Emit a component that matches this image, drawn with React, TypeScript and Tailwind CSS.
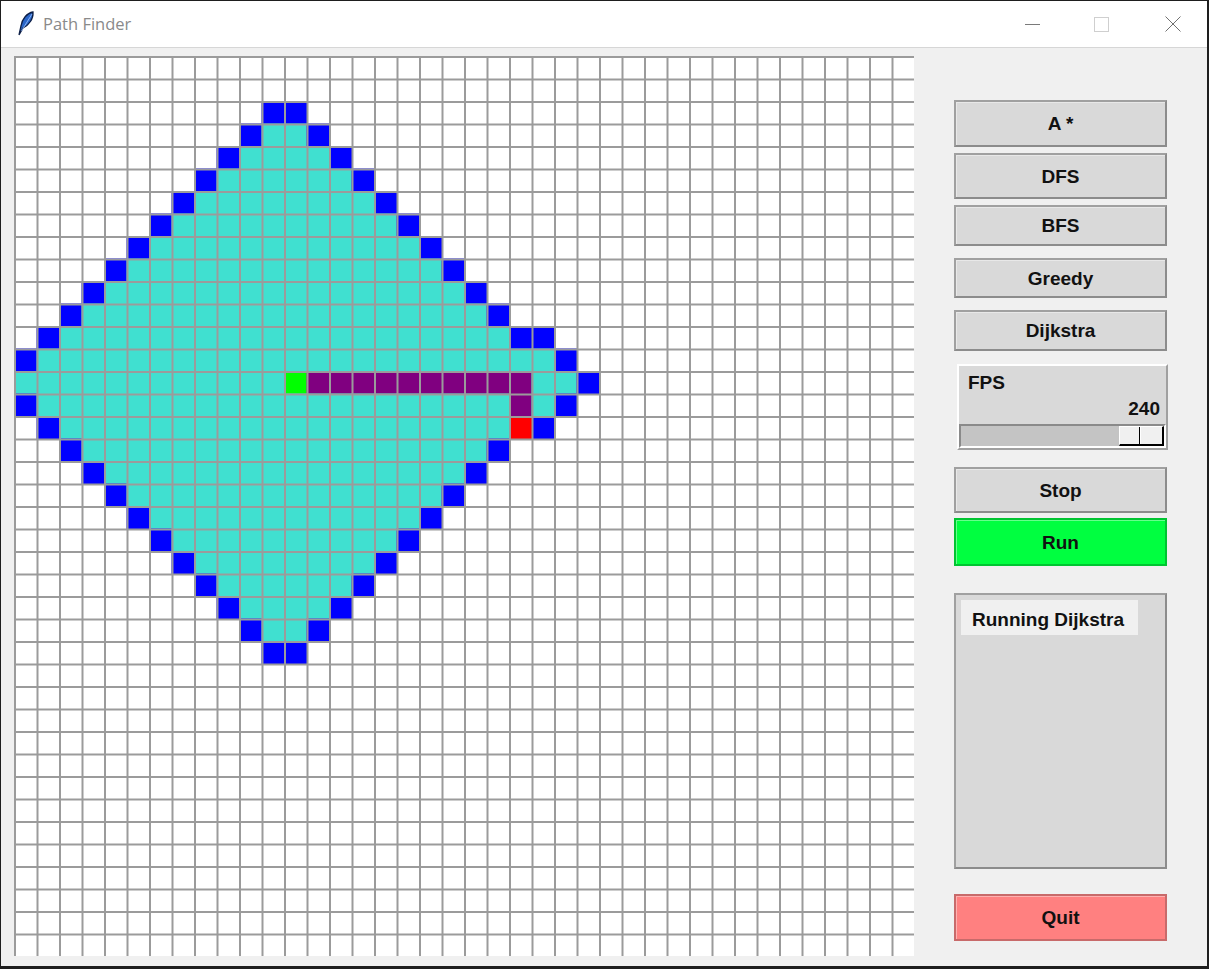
import React from 'react'

const TURQ = '#40e0d0'
const BLUE = '#0000ff'
const PURPLE = '#800080'
const GREEN = '#00ff00'
const RED = '#ff0000'

const N = 40
const CELL = 22.5

function buildCells() {
  const cells = new Map<string, string>()
  const set = (c: number, r: number, color: string) => {
    if (c >= 0 && c < N) cells.set(`${c},${r}`, color)
  }
  const fill = (r: number, a: number, b: number, color: string) => {
    for (let c = a; c <= b; c++) set(c, r, color)
  }

  // explored area (closed = turquoise, open frontier = blue)
  set(11, 2, BLUE)
  set(12, 2, BLUE)
  for (let r = 3; r <= 11; r++) {
    set(13 - r, r, BLUE)
    fill(r, 14 - r, r + 9, TURQ)
    set(r + 10, r, BLUE)
  }
  set(1, 12, BLUE)
  fill(12, 2, 21, TURQ)
  set(22, 12, BLUE)
  set(23, 12, BLUE)
  set(0, 13, BLUE)
  fill(13, 1, 23, TURQ)
  set(24, 13, BLUE)
  fill(14, 0, 24, TURQ)
  set(25, 14, BLUE)
  set(0, 15, BLUE)
  fill(15, 1, 23, TURQ)
  set(24, 15, BLUE)
  set(1, 16, BLUE)
  fill(16, 2, 21, TURQ)
  set(23, 16, BLUE)
  for (let r = 17; r <= 25; r++) {
    set(r - 15, r, BLUE)
    fill(r, r - 14, 37 - r, TURQ)
    set(38 - r, r, BLUE)
  }
  set(11, 26, BLUE)
  set(12, 26, BLUE)

  // path, start and end
  fill(14, 13, 22, PURPLE)
  set(22, 15, PURPLE)
  set(12, 14, GREEN)
  set(22, 16, RED)

  return [...cells.entries()].map(([key, color]) => {
    const [c, r] = key.split(',').map(Number)
    return { c, r, color }
  })
}

const cells = buildCells()

function Grid() {
  const lines = Array.from({ length: N }, (_, i) => i * CELL + 1)
  return (
    <svg width={900} height={900} viewBox="0 0 900 900" className="block shrink-0">
      <rect x={0} y={0} width={900} height={900} fill="#ffffff" />
      {cells.map(({ c, r, color }) => (
        <rect key={`${c}-${r}`} x={c * CELL} y={r * CELL} width={CELL + 0.5} height={CELL + 0.5} fill={color} />
      ))}
      {lines.map((p) => (
        <line key={`v${p}`} x1={p} y1={0} x2={p} y2={900} stroke="#9b9b9b" strokeWidth={2} />
      ))}
      {lines.map((p) => (
        <line key={`h${p}`} x1={0} y1={p} x2={900} y2={p} stroke="#9b9b9b" strokeWidth={2} />
      ))}
    </svg>
  )
}

function Feather() {
  return (
    <svg width="18" height="26" viewBox="0 0 18 26">
      <path
        d="M16 1 C 10 2, 5 8, 4 15 L 2 24 L 6 17 C 12 14, 16.5 8, 16 1 Z"
        fill="#2a66c9"
        stroke="#0d1f47"
        strokeWidth="1.3"
      />
      <path d="M15 3 L 4.5 20" stroke="#9cc3ff" strokeWidth="0.8" />
    </svg>
  )
}

function TkButton({ label, className }: { label: string; className: string }) {
  return (
    <div
      className={`flex w-[213px] items-center justify-center border-2 pt-[2px] font-bold text-[19px] text-[#111] ${className}`}
    >
      {label}
    </div>
  )
}

const plain =
  'bg-[#d9d9d9] border-t-[#a0a0a0] border-l-[#a0a0a0] border-r-[#8c8c8c] border-b-[#8c8c8c] shadow-[inset_1px_1px_0_#e8e8e8]'

export default function App() {
  return (
    <div
      className="h-[969px] w-[1209px] bg-[#1e1e1e] pl-px pt-px pr-[2px] pb-[3px]"
      style={{ fontFamily: '"Liberation Sans", Arial, sans-serif' }}
    >
      <div className="flex h-full flex-col bg-[#f0f0f0]">
        {/* title bar */}
        <div className="flex h-[47px] shrink-0 items-center border-b border-[#d6d6d6] bg-white pl-[16px]">
          <Feather />
          <span
            className="ml-[8px] text-[16.5px] text-[#8a8a8a]"
            style={{ fontFamily: '"Open Sans", "Noto Sans", sans-serif' }}
          >
            Path Finder
          </span>
          <div className="ml-auto flex items-center pr-[26px]">
            <div className="h-px w-[15px] bg-[#7a7a7a]" />
            <div className="ml-[54px] h-[15px] w-[15px] border border-[#cfcfcf]" />
            <svg className="ml-[56px]" width="16" height="16" viewBox="0 0 16 16">
              <path d="M0.5 0.5 L15.5 15.5 M15.5 0.5 L0.5 15.5" stroke="#707070" strokeWidth="1" />
            </svg>
          </div>
        </div>

        {/* body */}
        <div className="flex flex-1 items-start pl-[13px] pt-[8px]">
          <Grid />

          <div className="ml-[40px] mt-[44px] flex w-[213px] flex-col">
            <TkButton label="A *" className={`h-[47px] ${plain}`} />
            <TkButton label="DFS" className={`mt-[6px] h-[46px] ${plain}`} />
            <TkButton label="BFS" className={`mt-[6px] h-[41px] ${plain}`} />
            <TkButton label="Greedy" className={`mt-[12px] h-[40px] ${plain}`} />
            <TkButton label="Dijkstra" className={`mt-[12px] h-[41px] ${plain}`} />

            {/* FPS scale */}
            <div className="ml-[3px] mt-[13px] flex h-[86px] w-[211px] flex-col border-2 border-t-white border-l-white border-r-[#a0a0a0] border-b-[#a0a0a0] bg-[#d9d9d9] text-[#111]">
              <div className="pl-[9px] pt-[6px] text-[19px] font-bold leading-[22px]">FPS</div>
              <div className="mt-[4px] pr-[6px] text-right text-[19px] font-bold leading-[22px]">240</div>
              <div className="mt-[4px] flex h-[25px] items-stretch justify-end border-2 border-t-[#8a8a8a] border-l-[#8a8a8a] border-r-white border-b-white bg-[#c4c4c4]">
                <div className="flex w-[45px] border-b-2 border-r-2 border-t border-l border-b-black border-r-black border-t-white border-l-white bg-[#f0f0f0]">
                  <div className="w-[20px] border-r border-black" />
                  <div className="w-px bg-white" />
                </div>
              </div>
            </div>

            <TkButton label="Stop" className={`mt-[17px] h-[46px] ${plain}`} />
            <TkButton
              label="Run"
              className="mt-[5px] h-[48px] bg-[#00ff40] border-[#00c431] shadow-[inset_1px_1px_0_#66ff8c]"
            />

            {/* status frame */}
            <div className="mt-[27px] h-[276px] w-[213px] border-2 border-t-[#a0a0a0] border-l-[#a0a0a0] border-r-[#8c8c8c] border-b-[#8c8c8c] bg-[#d9d9d9] px-[5px] pt-[5px]">
              <div className="flex h-[35px] w-[177px] items-center bg-[#f0f0f0] pl-[11px] pt-[6px] text-[19px] font-bold text-[#111]">
                Running Dijkstra
              </div>
            </div>

            <TkButton
              label="Quit"
              className="mt-[25px] h-[47px] bg-[#ff8080] border-[#c86a6a] shadow-[inset_1px_1px_0_#ffb0b0]"
            />
          </div>
        </div>
      </div>
    </div>
  )
}
